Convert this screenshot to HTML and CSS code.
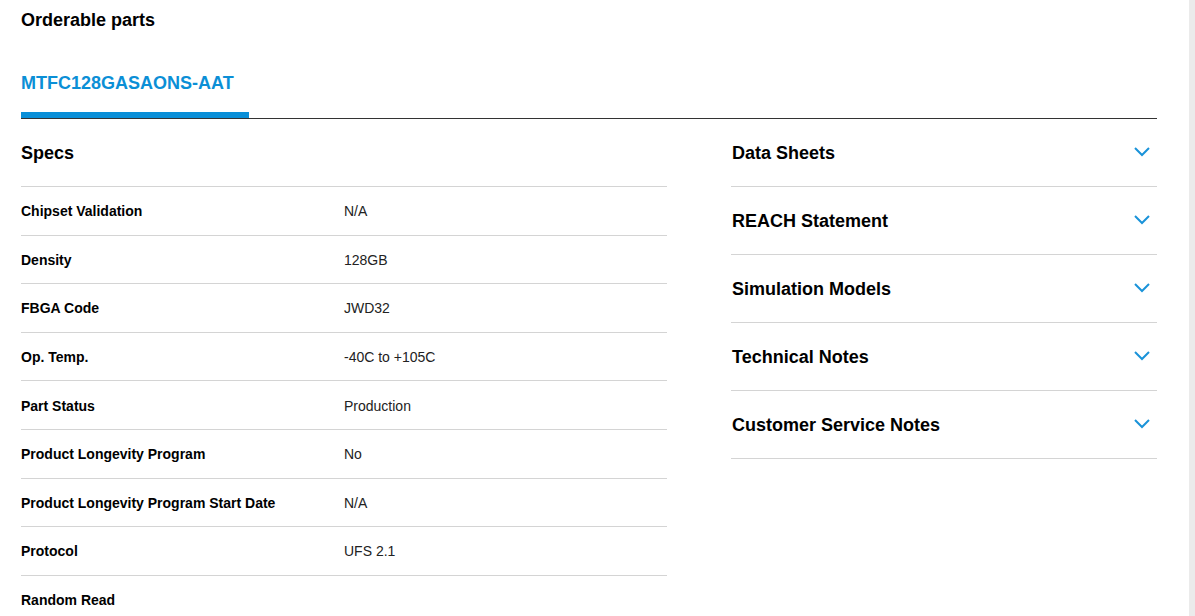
FILE: index.html
```html
<!DOCTYPE html>
<html lang="en">
<head>
  <meta charset="utf-8">
  <title>Orderable parts</title>
  <link rel="stylesheet" href="styles.css">
</head>
<body>
  <div class="page">
    <h2 class="page-title">Orderable parts</h2>

    <div class="tabs">
      <div class="tab tab--active">MTFC128GASAONS-AAT</div>
    </div>

    <div class="part-detail">
      <section class="specs">
        <h3 class="specs-title">Specs</h3>
        <ul class="spec-list">
          <li class="spec"><span class="spec-name">Chipset Validation</span><span class="spec-value">N/A</span></li>
          <li class="spec"><span class="spec-name">Density</span><span class="spec-value">128GB</span></li>
          <li class="spec"><span class="spec-name">FBGA Code</span><span class="spec-value">JWD32</span></li>
          <li class="spec"><span class="spec-name">Op. Temp.</span><span class="spec-value">-40C to +105C</span></li>
          <li class="spec"><span class="spec-name">Part Status</span><span class="spec-value">Production</span></li>
          <li class="spec"><span class="spec-name">Product Longevity Program</span><span class="spec-value">No</span></li>
          <li class="spec"><span class="spec-name">Product Longevity Program Start Date</span><span class="spec-value">N/A</span></li>
          <li class="spec"><span class="spec-name">Protocol</span><span class="spec-value">UFS 2.1</span></li>
          <li class="spec"><span class="spec-name">Random Read</span><span class="spec-value"></span></li>
        </ul>
      </section>

      <section class="docs">
        <div class="accordion"><span>Data Sheets</span><svg class="chevron" viewBox="0 0 16 10"><path d="M1 1 L8 8 L15 1"/></svg></div>
        <div class="accordion"><span>REACH Statement</span><svg class="chevron" viewBox="0 0 16 10"><path d="M1 1 L8 8 L15 1"/></svg></div>
        <div class="accordion"><span>Simulation Models</span><svg class="chevron" viewBox="0 0 16 10"><path d="M1 1 L8 8 L15 1"/></svg></div>
        <div class="accordion"><span>Technical Notes</span><svg class="chevron" viewBox="0 0 16 10"><path d="M1 1 L8 8 L15 1"/></svg></div>
        <div class="accordion"><span>Customer Service Notes</span><svg class="chevron" viewBox="0 0 16 10"><path d="M1 1 L8 8 L15 1"/></svg></div>
      </section>
    </div>
  </div>
</body>
</html>
```

FILE: styles.css
```css
*, *::before, *::after {
  box-sizing: border-box;
}
body {
  margin: 0;
  /* scrollbar track on the right edge */
  background: linear-gradient(to right, #fff calc(100% - 6px), #ebebeb calc(100% - 6px));
  color: #000;
  font-family: "Liberation Sans", Arial, sans-serif;
}
.page {
  padding: 0 38px 0 21px;
}
.page-title {
  margin: 0;
  padding-top: 10px;
  height: 64px;
  font-size: 18px;
  line-height: 20px;
  font-weight: bold;
}

/* Tabs */
.tabs {
  display: flex;
  border-bottom: 1px solid #333;
}
.tab {
  width: 228px;
  padding-top: 9px;
  height: 54px;
  font-size: 18px;
  line-height: 20px;
  font-weight: bold;
  color: #0b8fd6;
}
.tab--active {
  border-bottom: 6px solid #0a8fd8;
}

/* Columns */
.part-detail {
  display: grid;
  grid-template-columns: 646fr 426fr;
  column-gap: 64px;
}
.specs-title {
  margin: 0;
  height: 68px;
  padding-top: 1px;
  display: flex;
  align-items: center;
  font-size: 18px;
  font-weight: bold;
  border-bottom: 1px solid #d4d4d4;
}
.spec-list {
  list-style: none;
  margin: 0;
  padding: 0;
}
.spec {
  display: grid;
  grid-template-columns: 1fr 1fr;
  align-items: center;
  height: 48.6px;
  padding-top: 1px;
  font-size: 14px;
  border-bottom: 1px solid #d4d4d4;
}
.spec-name {
  font-weight: bold;
}
.spec-value {
  color: #222;
}

/* Accordion */
.accordion {
  display: flex;
  align-items: center;
  justify-content: space-between;
  height: 68px;
  padding: 1px 7px 0 1px;
  font-size: 18px;
  font-weight: bold;
  border-bottom: 1px solid #d4d4d4;
}
.chevron {
  width: 16px;
  height: 10px;
  margin-top: -3px;
  fill: none;
  stroke: #1a93d9;
  stroke-width: 2;
}
```
